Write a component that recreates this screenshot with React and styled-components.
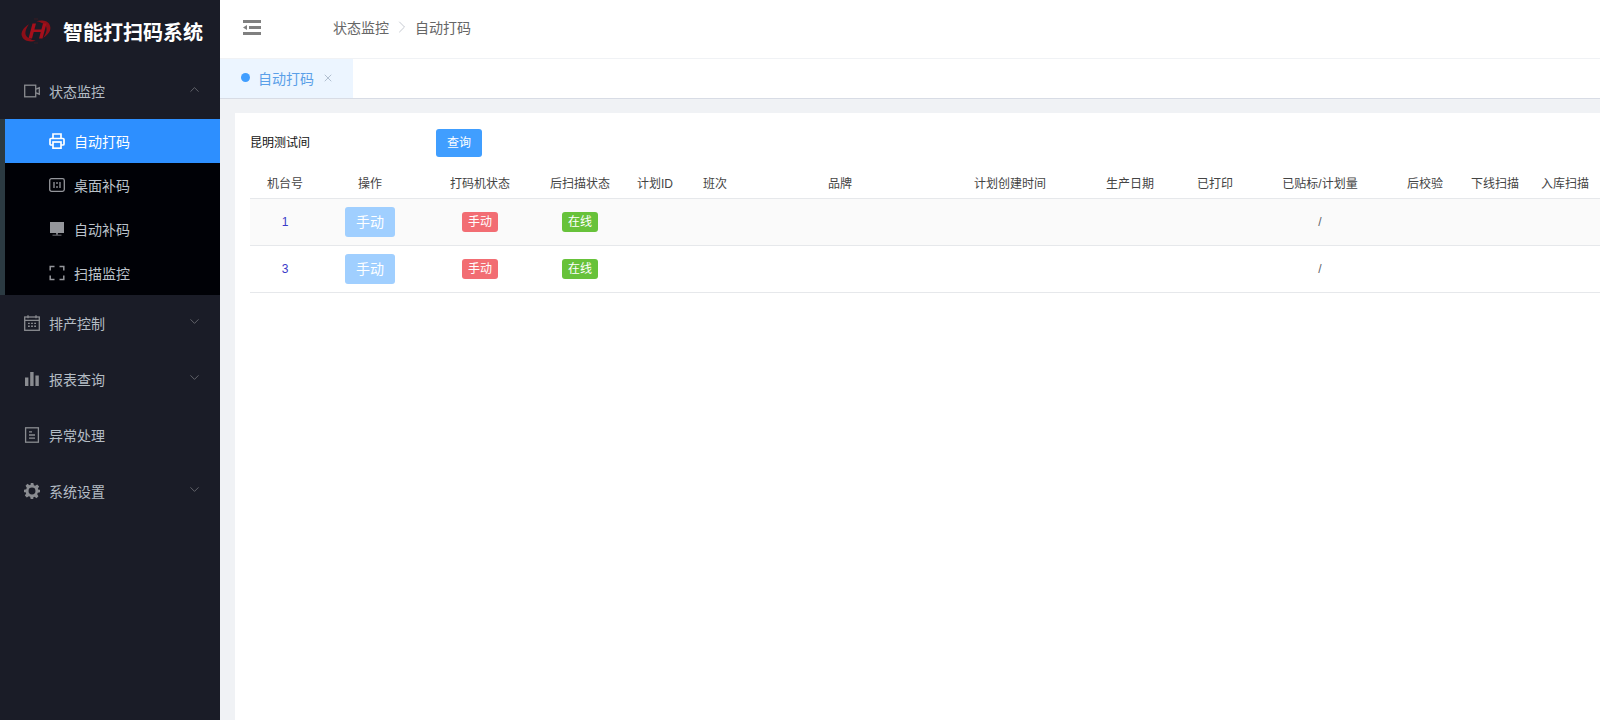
import React from "react";
import styled, { createGlobalStyle } from "styled-components";
import { ChevronDown, ChevronUp, ChevronRight, X } from "lucide-react";

const GlobalStyle = createGlobalStyle`
  html, body {
    margin: 0;
    padding: 0;
    height: 100%;
    overflow: hidden;
    font-family: "Liberation Sans", "Noto Sans CJK SC", sans-serif;
  }
  #root {
    height: 100%;
  }
  * {
    box-sizing: border-box;
  }
`;

const columns = [
  { title: "机台号", width: 70 },
  { title: "操作", width: 100 },
  { title: "打码机状态", width: 120 },
  { title: "后扫描状态", width: 80 },
  { title: "计划ID", width: 70 },
  { title: "班次", width: 50 },
  { title: "品牌", width: 200 },
  { title: "计划创建时间", width: 140 },
  { title: "生产日期", width: 100 },
  { title: "已打印", width: 70 },
  { title: "已贴标/计划量", width: 140 },
  { title: "后校验", width: 70 },
  { title: "下线扫描", width: 70 },
  { title: "入库扫描", width: 70 },
];

const machines = ["1", "3"];

const Logo = () => (
  <svg width="32" height="30" viewBox="0 0 32 30">
    <g transform="rotate(-22 16 15)">
      <path d="M1 15C1 10 6 7 12 6 8 8.500 5 12 5 15s3 6.500 7 9C6 23 1 20 1 15z" fill="#8c0f18" />
      <path d="M31 15c0 5-5 8-11 9 4-2.500 7-6 7-9s-3-6.500-7-9c6 1 11 4 11 9z" fill="#8c0f18" />
    </g>
    <path d="M12.500 7.500h3.500L12 22.500H8.500zM23 7.500h3.500l-4 15H19zM12 13.500h10.500l-.6 2.400H11.400z" fill="#a50f1b" />
    <path d="M14 3h4M14 27h4" stroke="#3a1a22" strokeWidth="1" />
  </svg>
);

const CameraIcon = () => (
  <svg width="16" height="16" viewBox="0 0 16 16" fill="none" stroke="currentColor" strokeWidth="1.3">
    <rect x="0.7" y="2.2" width="11" height="11.600" />
    <path d="M12 6.200l3.300-1.400v6.400L12 9.800" />
  </svg>
);

const PrinterIcon = () => (
  <svg width="16" height="16" viewBox="0 0 16 16" fill="none" stroke="currentColor" strokeWidth="1.700">
    <path d="M4 5V1h8v4" />
    <path d="M4 12H2a1 1 0 01-1-1V6.500a1 1 0 011-1h12a1 1 0 011 1V11a1 1 0 01-1 1h-2" />
    <rect x="4" y="9" width="8" height="6.200" />
  </svg>
);

const DeskIcon = () => (
  <svg width="16" height="16" viewBox="0 0 16 16" fill="none" stroke="currentColor" strokeWidth="1.300">
    <rect x="0.700" y="1.700" width="14.600" height="12.600" rx="1.800" />
    <path d="M5 5v6M8 5v2M8 9v2M11 5v6" />
  </svg>
);

const MonitorIcon = () => (
  <svg width="16" height="16" viewBox="0 0 16 16" fill="currentColor">
    <rect x="1" y="1" width="14" height="11" />
    <path d="M7.200 12h1.600v1.600H7.200zM3.500 13.800h9v.8h-9z" />
  </svg>
);

const ScanIcon = () => (
  <svg width="16" height="16" viewBox="0 0 16 16" fill="none" stroke="currentColor" strokeWidth="1.500">
    <path d="M5.500 1.500H1.200v4M10.500 1.500h4.300v4M5.500 14.500H1.200v-4M10.500 14.500h4.300v-4" />
  </svg>
);

const CalendarIcon = () => (
  <svg width="16" height="16" viewBox="0 0 16 16" fill="none" stroke="currentColor" strokeWidth="1.300">
    <rect x="0.700" y="2" width="14.600" height="13.300" />
    <path d="M0.700 5.400h14.600M4 0.300v3M12 0.300v3" />
    <path d="M4 8.400h1.800M7.100 8.400h1.800M10.200 8.400h1.800M4 11.200h1.800M7.100 11.200h1.800M10.200 11.200h1.800" strokeWidth="1.400" />
  </svg>
);

const BarsIcon = () => (
  <svg width="16" height="16" viewBox="0 0 16 16" fill="currentColor">
    <rect x="1" y="6.500" width="3.400" height="8.500" />
    <rect x="6.200" y="1" width="3.400" height="14" />
    <rect x="11.400" y="4.500" width="3.400" height="10.500" />
  </svg>
);

const DocIcon = () => (
  <svg width="16" height="16" viewBox="0 0 16 16" fill="none" stroke="currentColor" strokeWidth="1.300">
    <rect x="1.600" y="0.800" width="12.800" height="14.400" />
    <path d="M5 4.800h3M5 8h6M5 11.200h6" />
  </svg>
);

const GearIcon = () => (
  <svg width="16" height="16" viewBox="0 0 24 24" fill="currentColor">
    <path
      fillRule="evenodd"
      d="M10 0h4l.8 3.400 2 .8 3-1.900 2.900 2.900-1.900 3 .8 2L24 10v4l-3.400.8-.8 2 1.900 3-2.900 2.900-3-1.900-2 .8L14 24h-4l-.8-3.400-2-.8-3 1.900-2.900-2.900 1.900-3-.8-2L0 14v-4l3.400-.8.8-2-1.900-3 2.900-2.900 3 1.900 2-.8zM12 6.800a5.200 5.200 0 100 10.400 5.200 5.200 0 000-10.400z"
    />
  </svg>
);

const MenuFoldIcon = () => (
  <svg width="18" height="15" viewBox="0 0 18 15" fill="#808080">
    <rect x="0" y="0" width="18" height="3" />
    <rect x="6" y="6" width="12" height="3" />
    <rect x="0" y="12" width="18" height="3" />
    <path d="M0 7.500L4 5v5z" />
  </svg>
);

const App = () => {
  return (
    <Page>
      <GlobalStyle />
      <Sidebar>
        <Brand>
          <Logo />
          <BrandName>智能打扫码系统</BrandName>
        </Brand>
        <MenuItem>
          <CameraIcon />
          <span>状态监控</span>
          <ChevronUp size={15} strokeWidth={1} />
        </MenuItem>
        <SubMenu>
          <SubItem $active>
            <PrinterIcon />
            <span>自动打码</span>
          </SubItem>
          <SubItem>
            <DeskIcon />
            <span>桌面补码</span>
          </SubItem>
          <SubItem>
            <MonitorIcon />
            <span>自动补码</span>
          </SubItem>
          <SubItem>
            <ScanIcon />
            <span>扫描监控</span>
          </SubItem>
        </SubMenu>
        <MenuItem>
          <CalendarIcon />
          <span>排产控制</span>
          <ChevronDown size={15} strokeWidth={1} />
        </MenuItem>
        <MenuItem>
          <BarsIcon />
          <span>报表查询</span>
          <ChevronDown size={15} strokeWidth={1} />
        </MenuItem>
        <MenuItem>
          <DocIcon />
          <span>异常处理</span>
        </MenuItem>
        <MenuItem>
          <GearIcon />
          <span>系统设置</span>
          <ChevronDown size={15} strokeWidth={1} />
        </MenuItem>
      </Sidebar>
      <Main>
        <TopBar>
          <MenuFoldIcon />
          <Breadcrumb>
            <span>状态监控</span>
            <ChevronRight size={20} strokeWidth={1.1} color="#c0c4cc" />
            <span>自动打码</span>
          </Breadcrumb>
        </TopBar>
        <TabBar>
          <Tab>
            <TabDot />
            <span>自动打码</span>
            <X size={12} strokeWidth={1.2} color="#8a9bb0" />
          </Tab>
        </TabBar>
        <Content>
          <Card>
            <FilterRow>
              <RoomName>昆明测试间</RoomName>
              <QueryButton>查询</QueryButton>
            </FilterRow>
            <Table>
              <colgroup>
                {columns.map((col) => (
                  <col key={col.title} style={{ width: col.width }} />
                ))}
              </colgroup>
              <thead>
                <tr>
                  {columns.map((col) => (
                    <Th key={col.title}>{col.title}</Th>
                  ))}
                </tr>
              </thead>
              <tbody>
                {machines.map((no, i) => (
                  <Row key={no} $striped={i % 2 === 0}>
                    <Td>
                      <MachineNo>{no}</MachineNo>
                    </Td>
                    <Td>
                      <ManualButton>手动</ManualButton>
                    </Td>
                    <Td>
                      <Tag $color="#f26d73">手动</Tag>
                    </Td>
                    <Td>
                      <Tag $color="#67c23a">在线</Tag>
                    </Td>
                    <Td />
                    <Td />
                    <Td />
                    <Td />
                    <Td />
                    <Td />
                    <Td>/</Td>
                    <Td />
                    <Td />
                    <Td />
                  </Row>
                ))}
              </tbody>
            </Table>
          </Card>
        </Content>
      </Main>
    </Page>
  );
};

const Page = styled.div`
  display: flex;
  width: 100%;
  height: 100%;
  overflow: hidden;
`;

const Sidebar = styled.aside`
  flex: 0 0 220px;
  background: #1a1c27;
`;

const Brand = styled.div`
  display: flex;
  align-items: center;
  gap: 11px;
  height: 63px;
  padding-left: 20px;
  padding-bottom: 1px;
`;

const BrandName = styled.span`
  color: #fff;
  font-size: 20px;
  font-weight: 700;
`;

const MenuItem = styled.div`
  display: flex;
  align-items: center;
  height: 56px;
  padding: 0 18px 0 24px;
  color: #b4bcc4;
  font-size: 14px;

  & > svg:first-child {
    color: #8a8c91;
    margin-right: 9px;
  }
  & > span {
    flex: 1;
  }
  & > svg:last-child:not(:first-child) {
    color: #8a8c91;
    margin-top: -4px;
  }
`;

const SubMenu = styled.div`
  border-left: 5px solid #2b3a42;
  background: #000106;
`;

const SubItem = styled.div`
  display: flex;
  align-items: center;
  gap: 9px;
  height: 44px;
  padding-left: 44px;
  font-size: 14px;
  color: ${(p) => (p.$active ? "#fff" : "#bcc3ca")};
  background: ${(p) => (p.$active ? "#2d8fff" : "transparent")};

  & > svg {
    color: ${(p) => (p.$active ? "#fff" : "#94969b")};
  }
`;

const Main = styled.main`
  flex: 1;
  min-width: 0;
  display: flex;
  flex-direction: column;
  background: #f0f2f5;
`;

const TopBar = styled.header`
  flex: 0 0 59px;
  display: flex;
  align-items: center;
  padding-left: 23px;
  padding-bottom: 4px;
  background: #fff;
  border-bottom: 1px solid #f0f2f5;
`;

const Breadcrumb = styled.div`
  display: flex;
  align-items: center;
  gap: 3px;
  margin-left: 72px;
  font-size: 14px;
  color: #666;
`;

const TabBar = styled.div`
  flex: 0 0 40px;
  display: flex;
  background: #fff;
  border-bottom: 1px solid #d8dce5;
`;

const Tab = styled.div`
  display: flex;
  align-items: center;
  width: 133px;
  padding-left: 21px;
  padding-bottom: 2px;
  font-size: 14px;
  color: #5a9fe8;
  background: #ecf5ff;

  & > span {
    margin-right: 8px;
  }
`;

const TabDot = styled.i`
  width: 9px;
  height: 9px;
  margin-right: 8px;
  border-radius: 50%;
  background: #409eff;
`;

const Content = styled.div`
  flex: 1;
  min-height: 0;
  padding: 14px 0 0 15px;
`;

const Card = styled.section`
  height: 100%;
  padding: 16px 0 0 15px;
  background: #fff;
`;

const FilterRow = styled.div`
  display: flex;
  align-items: center;
  height: 28px;
`;

const RoomName = styled.span`
  width: 186px;
  padding-bottom: 3px;
  font-size: 12px;
  color: #111;
`;

const QueryButton = styled.button`
  width: 46px;
  height: 28px;
  padding: 0 0 3px;
  border: 0;
  border-radius: 3px;
  background: #409eff;
  color: #fff;
  font-family: inherit;
  font-size: 12px;
`;

const Table = styled.table`
  width: 1350px;
  margin-top: 10px;
  border-collapse: collapse;
  table-layout: fixed;
`;

const Th = styled.th`
  height: 31px;
  padding: 0;
  border-bottom: 1px solid #e6e8eb;
  font-size: 12px;
  font-weight: 400;
  color: #444;
  white-space: nowrap;
`;

const Row = styled.tr`
  background: ${(p) => (p.$striped ? "#fafafa" : "#fff")};
`;

const Td = styled.td`
  height: 47px;
  padding: 0;
  border-bottom: 1px solid #e6e8eb;
  font-size: 12px;
  color: #606266;
  text-align: center;
`;

const MachineNo = styled.span`
  color: #3a3ac8;
`;

const ManualButton = styled.button`
  display: block;
  width: 50px;
  height: 30px;
  margin: 0 auto;
  padding: 0 0 1px;
  border: 0;
  border-radius: 3px;
  background: #a0cfff;
  color: #fff;
  font-family: inherit;
  font-size: 14px;
`;

const Tag = styled.span`
  display: inline-block;
  width: 36px;
  height: 20px;
  border-radius: 3px;
  background: ${(p) => p.$color};
  color: #fff;
  font-size: 12px;
  line-height: 20px;
  vertical-align: middle;
`;

export default App;
